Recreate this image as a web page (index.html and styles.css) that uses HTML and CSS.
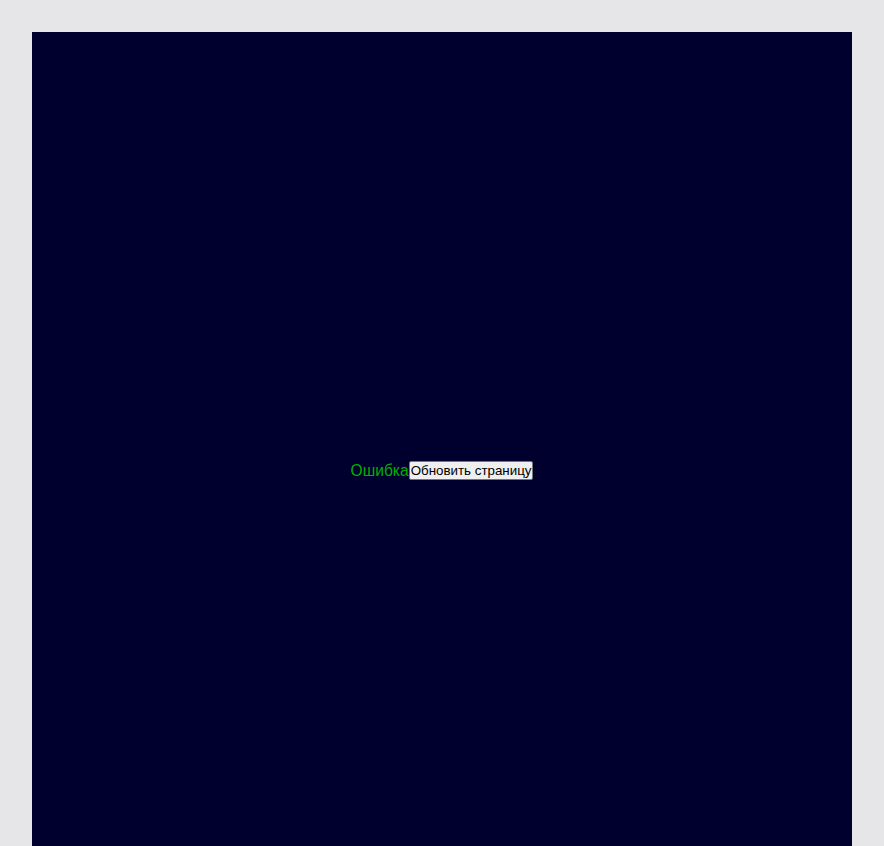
FILE: index.html
```html
<!DOCTYPE html>
<html lang="ru">
<head>
<meta charset="utf-8">
<title>Ошибка</title>
<link rel="stylesheet" href="styles.css">
</head>
<body>
<main class="stage">
  <div class="error">
    <span class="error-text">Ошибка</span><button class="reload" type="button">Обновить страницу</button>
  </div>
</main>
</body>
</html>
```
FILE: styles.css
```css
html, body {
  margin: 0;
  padding: 0;
}
body {
  background: #e6e6e8;
  padding: 32px;
  font-family: "Liberation Sans", Arial, sans-serif;
}
.stage {
  width: 820px;
  height: 876px;
  background: #00002e;
  display: flex;
  align-items: center;
  justify-content: center;
}
.error {
  display: flex;
  align-items: center;
}
.error-text {
  color: #00b000;
  font-size: 15.6px;
  line-height: 19px;
}
.reload {
  font-family: "Liberation Sans", Arial, sans-serif;
  font-size: 13.333px;
  line-height: 15px;
  padding: 1px 1px;
  margin: 0;
  color: #000;
  background: #efefef;
  border: 1px solid #767676;
  border-radius: 2px;
}
```
